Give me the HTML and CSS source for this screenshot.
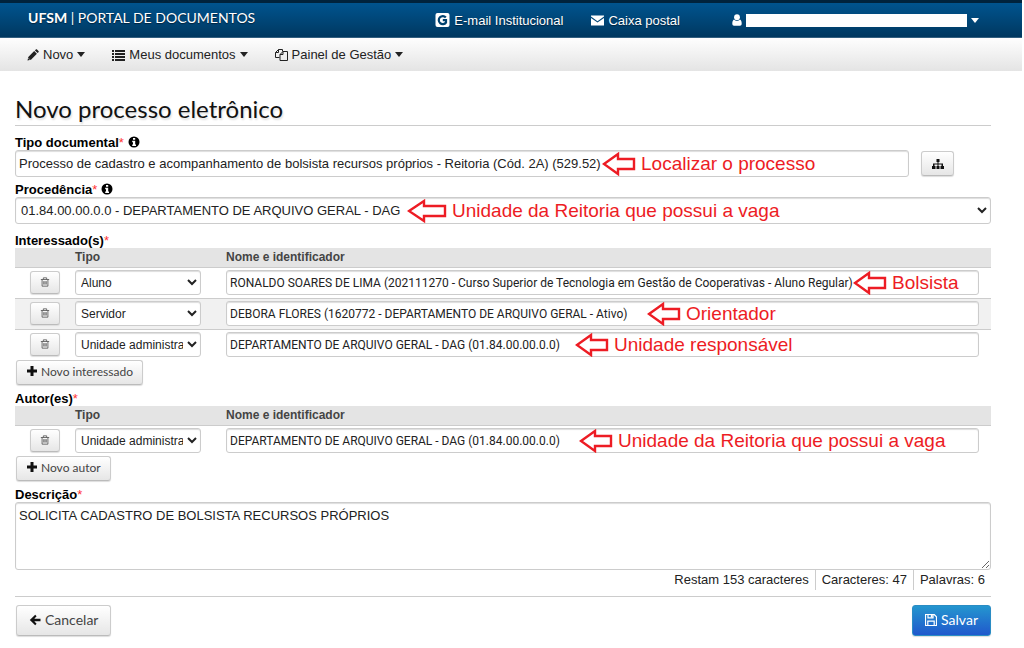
FILE: index.html
```
<!DOCTYPE html>
<html lang="pt-BR">
<head>
  <meta charset="UTF-8">
  <title>UFSM | Portal de Documentos</title>
  <link rel="stylesheet" href="styles.css">
</head>
<body>
  <!-- shared icons -->
  <svg class="sprite" aria-hidden="true">
    <symbol id="trash" viewBox="0 0 12 12"><path d="M1 3h10M4 3V1h4v2M2.500 3v8h7V3M4.500 5v4M6 5v4M7.500 5v4" fill="none" stroke="currentColor"/></symbol>
    <symbol id="plus" viewBox="0 0 12 12"><path d="M4.500 1h3v3.500H11v3H7.500V11h-3V7.500H1v-3h3.500z"/></symbol>
    <symbol id="info" viewBox="0 0 12 12"><circle cx="6" cy="6" r="5.500"/><path d="M5 2h2.200v1.800H5zM4.200 4.800h3v3.700H8V10H4.200V8.500H5V6.200h-.8z" fill="#fff"/></symbol>
    <symbol id="arrow" viewBox="0 0 34 24"><path d="M2 12 16 2v5h16v10H16v5z" fill="#fff" stroke="#ed1c24" stroke-width="2.400"/></symbol>
    <symbol id="arrow-long" viewBox="0 0 40 24"><path d="M2 12 17 2v5h21v10H17v5z" fill="#fff" stroke="#ed1c24" stroke-width="2.400"/></symbol>
  </svg>

  <header class="topbar">
    <a class="brand" href="#"><b>UFSM</b> | PORTAL DE DOCUMENTOS</a>
    <nav class="toplinks">
      <a class="mail" href="#">
        <svg class="icon-g" viewBox="0 0 14 14"><rect width="14" height="14" rx="2" fill="#fff"/><path d="M10.300 4.500A4 4 0 1 0 10.500 9.500V7.200H7.300" fill="none" stroke="#00426f" stroke-width="2.200"/></svg>
        E-mail Institucional
      </a>
      <a class="inbox" href="#">
        <svg class="icon-list" viewBox="0 0 13 12"><path d="M0 1.500h13v1L6.500 7.200 0 2.500zM0 4l6.500 4.600L13 4v7.500H0z"/></svg>
        Caixa postal
      </a>
      <button class="user" type="button" aria-label="Usuário">
        <svg class="icon-user" viewBox="0 0 10 12"><circle cx="5" cy="3.200" r="2.900"/><path d="M2 5.500C.6 6.200.3 8 .3 9.800.3 11 1 11.700 2 11.700h6c1 0 1.700-.7 1.700-1.900 0-1.800-.3-3.600-1.700-4.300-1.500 1.800-4.500 1.800-6 0z"/></svg>
        <span class="user-name"></span>
        <span class="caret"></span>
      </button>
    </nav>
  </header>

  <nav class="menu">
    <a href="#">
      <svg class="icon" viewBox="0 0 12 12"><path d="M.5 11.500 1.300 8 7.200 2.100 9.900 4.800 4 10.700zM7.900 1.400l.9-.9c.4-.4.8-.4 1.200 0l1.500 1.500c.4.400.4.800 0 1.200l-.9.900z"/><path d="M1.500 9.300l1.200 1.200" stroke="#fff" stroke-width=".7"/></svg>
      Novo <span class="caret"></span>
    </a>
    <a href="#">
      <svg class="icon-list" viewBox="0 0 13 12"><path d="M0 1h2v2H0zM3 1h10v2H3zM0 4h2v2H0zM3 4h10v2H3zM0 7h2v2H0zM3 7h10v2H3zM0 10h2v2H0zM3 10h10v2H3z"/></svg>
      Meus documentos <span class="caret"></span>
    </a>
    <a href="#">
      <svg class="icon-list" viewBox="0 0 13 12"><path d="M4.500 8.500h-4v-5l3-3h4v2M3.500.5v3h-3M5 11.500v-6l3-3h4.500v9zM8 2.500v3H5" fill="none" stroke="currentColor"/></svg>
      Painel de Gestão <span class="caret"></span>
    </a>
  </nav>

  <main>
    <h1>Novo processo eletrônico</h1>
    <form>
      <label class="title" for="tipo">Tipo documental<i>*</i> <svg class="icon"><use href="#info"/></svg></label>
      <div class="search">
        <div class="field">
          <input class="control" id="tipo" type="text" value="Processo de cadastro e acompanhamento de bolsista recursos próprios - Reitoria (Cód. 2A) (529.52)">
          <span class="note note-tipo"><svg><use href="#arrow"/></svg>Localizar o processo</span>
        </div>
        <button class="btn btn-tree" type="button" aria-label="Localizar">
          <svg class="icon" viewBox="0 0 12 12"><path d="M4.500 1h3v3h-1v1.500H11V8h1v3H8.500V8h1V6.500h-3V8h1v3h-3V8h1V6.500h-3V8h1v3H0V8h1V5.500h4.500V4h-1z"/></svg>
        </button>
      </div>

      <label class="title" for="procedencia">Procedência<i>*</i> <svg class="icon"><use href="#info"/></svg></label>
      <div class="field">
        <select class="control" id="procedencia"><option>01.84.00.00.0.0 - DEPARTAMENTO DE ARQUIVO GERAL - DAG</option></select>
        <span class="note note-procedencia"><svg class="long"><use href="#arrow-long"/></svg>Unidade da Reitoria que possui a vaga</span>
      </div>

      <h2 class="title people">Interessado(s)<i>*</i></h2>
      <table>
        <thead>
          <tr><th class="col-del"></th><th class="col-tipo">Tipo</th><th>Nome e identificador</th></tr>
        </thead>
        <tbody>
          <tr>
            <td><button class="btn btn-del" type="button" aria-label="Excluir"><svg><use href="#trash"/></svg></button></td>
            <td><select aria-label="Tipo"><option>Aluno</option></select></td>
            <td>
              <div class="field">
                <input type="text" aria-label="Nome e identificador" value="RONALDO SOARES DE LIMA (202111270 - Curso Superior de Tecnologia em Gestão de Cooperativas - Aluno Regular)">
                <span class="note note-aluno"><svg><use href="#arrow"/></svg>Bolsista</span>
              </div>
            </td>
          </tr>
          <tr>
            <td><button class="btn btn-del" type="button" aria-label="Excluir"><svg><use href="#trash"/></svg></button></td>
            <td><select aria-label="Tipo"><option>Servidor</option></select></td>
            <td>
              <div class="field">
                <input type="text" aria-label="Nome e identificador" value="DEBORA FLORES (1620772 - DEPARTAMENTO DE ARQUIVO GERAL - Ativo)">
                <span class="note note-servidor"><svg><use href="#arrow"/></svg>Orientador</span>
              </div>
            </td>
          </tr>
          <tr>
            <td><button class="btn btn-del" type="button" aria-label="Excluir"><svg><use href="#trash"/></svg></button></td>
            <td><select aria-label="Tipo"><option>Unidade administrativa</option></select></td>
            <td>
              <div class="field">
                <input type="text" aria-label="Nome e identificador" value="DEPARTAMENTO DE ARQUIVO GERAL - DAG (01.84.00.00.0.0)">
                <span class="note note-unidade"><svg><use href="#arrow"/></svg>Unidade responsável</span>
              </div>
            </td>
          </tr>
        </tbody>
      </table>
      <button class="btn btn-add" type="button"><svg class="icon"><use href="#plus"/></svg>Novo interessado</button>

      <h2 class="title">Autor(es)<i>*</i></h2>
      <table>
        <thead>
          <tr><th class="col-del"></th><th class="col-tipo">Tipo</th><th>Nome e identificador</th></tr>
        </thead>
        <tbody>
          <tr>
            <td><button class="btn btn-del" type="button" aria-label="Excluir"><svg><use href="#trash"/></svg></button></td>
            <td><select aria-label="Tipo"><option>Unidade administrativa</option></select></td>
            <td>
              <div class="field">
                <input type="text" aria-label="Nome e identificador" value="DEPARTAMENTO DE ARQUIVO GERAL - DAG (01.84.00.00.0.0)">
                <span class="note note-autor"><svg><use href="#arrow"/></svg>Unidade da Reitoria que possui a vaga</span>
              </div>
            </td>
          </tr>
        </tbody>
      </table>
      <button class="btn btn-add" type="button"><svg class="icon"><use href="#plus"/></svg>Novo autor</button>

      <label class="title" for="descricao">Descrição<i>*</i></label>
      <textarea id="descricao">SOLICITA CADASTRO DE BOLSISTA RECURSOS PRÓPRIOS</textarea>
      <div class="counters">
        <span>Restam 153 caracteres</span>
        <span>Caracteres: 47</span>
        <span>Palavras: 6</span>
      </div>

      <div class="actions">
        <button class="btn btn-big" type="button">
          <svg class="icon" viewBox="0 0 12 12"><path d="M6.200.8 7.600 2.200 5.300 4.700H11.500v2.600H5.300l2.300 2.500-1.400 1.400L.8 6z"/></svg>Cancelar
        </button>
        <button class="btn btn-big btn-save" type="submit">
          <svg class="icon" viewBox="0 0 12 12"><path d="M.5.5h8.700l2.300 2.300v8.700H.5zM3 .5v3.300h5V.5M2.800 11.500V7.200h6.400v4.300" fill="none" stroke="currentColor" stroke-width="1.200"/><path d="M5.800 1h1.700v2.400H5.800z"/></svg>Salvar
        </button>
      </div>
    </form>
  </main>
</body>
</html>
```
FILE: styles.css
```
* {
  box-sizing: border-box;
}

body {
  margin: 0;
  background: #fff;
  color: #222;
  font-family: "Liberation Sans", Arial, sans-serif;
  font-size: 13px;
}

a {
  color: inherit;
  text-decoration: none;
}

svg {
  fill: currentColor;
  flex: none;
}

.sprite {
  display: none;
}

.icon {
  width: 12px;
  height: 12px;
}

.caret {
  border: 4px solid transparent;
  border-top: 5px solid currentColor;
  border-bottom: 0;
}

/* top bar */
.topbar {
  display: flex;
  justify-content: space-between;
  height: 38px;
  margin-right: 2px;
  padding: 0 43px 0 28px;
  border-top: 3px solid #00233d;
  border-bottom: 1px solid #335f80;
  background: linear-gradient(#00548f, #003860);
  color: #fff;
  text-shadow: 0 1px 1px #00233d;
}

.brand {
  font-family: Lato, sans-serif;
  font-size: 14px;
  line-height: 30px;
}

.toplinks {
  display: flex;
  align-items: center;
}

.toplinks a,
.user {
  display: flex;
  align-items: center;
  gap: 4px;
}

.mail {
  margin-right: 28px;
}

.inbox {
  margin-right: 52px;
}

.icon-g {
  width: 15px;
  height: 14px;
}

.user {
  padding: 0;
  border: 0;
  background: none;
  color: #fff;
}

.icon-user {
  width: 10px;
  height: 12px;
}

.user-name {
  width: 221px;
  height: 13px;
  background: #fff;
}

/* menu */
.menu {
  display: flex;
  gap: 27px;
  height: 33px;
  margin-right: 2px;
  padding: 0 27px;
  background: linear-gradient(#fefefe, #e4e4e4);
}

.menu a {
  display: flex;
  align-items: center;
  gap: 4px;
}

.icon-list {
  width: 13px;
  height: 12px;
}

main {
  padding: 22px 33px 12px 15px;
}

h1 {
  margin: 0 0 8px;
  border-bottom: 1px solid #ccc;
  color: #111;
  font-family: Lato, sans-serif;
  font-size: 24px;
  font-weight: 400;
  line-height: 32px;
  text-shadow: 1px 2px 2px #ddd;
}

.title {
  display: flex;
  align-items: center;
  margin: 0;
  height: 16px;
  color: #000;
  font-size: 13px;
  font-weight: bold;
}

.title i {
  color: #f33;
  font-style: normal;
  font-weight: normal;
}

.title .icon {
  margin-left: 4px;
}

.people {
  margin-top: 8px;
}

/* controls */
.field {
  position: relative;
}

input,
select,
textarea {
  display: block;
  width: 100%;
  height: 25px;
  padding: 0 3px;
  border: 1px solid #ccc;
  border-radius: 3px;
  background: #fff;
  box-shadow: inset 0 1px 1px #ddd;
  color: #222;
  font-family: inherit;
  font-size: 12px;
}

td input {
  font-family: Roboto, Arial, sans-serif;
}

.control {
  height: 27px;
  font-size: 13px;
}

select {
  padding: 0 1px;
}

.search {
  display: flex;
  align-items: center;
  gap: 12px;
  margin-bottom: 4px;
  padding-right: 37px;
}

.search .field {
  flex: 1;
}

.btn {
  display: flex;
  align-items: center;
  justify-content: center;
  border: 1px solid #ccc;
  border-bottom-color: #bbb;
  border-radius: 3px;
  background: linear-gradient(#fff, #e6e6e6);
  box-shadow: 0 1px 1px #ddd;
  color: #111;
  font-family: Lato, sans-serif;
}

.btn-tree {
  width: 33px;
  height: 25px;
  padding: 0;
}

.btn-del {
  width: 30px;
  height: 23px;
  margin-left: 15px;
  padding: 0 0 2px;
  color: #555;
}

.btn-del svg {
  width: 10px;
  height: 10px;
}

.btn-add {
  gap: 3px;
  height: 25px;
  margin: 0 0 5px 1px;
  padding: 0 9px 3px;
  color: #444;
  font-size: 12px;
}

.btn-big {
  gap: 4px;
  height: 31px;
  padding: 0 12px 2px;
  color: #444;
  font-size: 14px;
}

.btn-add .icon,
.btn-big .icon {
  color: #111;
}

.btn-save,
.btn-save .icon {
  color: #fff;
}

.btn-save {
  border-color: #2a8cc4;
  background: linear-gradient(#2496cf, #2058cc);
}

/* tables */
table {
  width: 100%;
  border-collapse: separate;
  border-spacing: 0;
  table-layout: fixed;
}

.col-del {
  width: 60px;
}

.col-tipo {
  width: 151px;
}

th {
  height: 19px;
  padding: 0 0 2px;
  background: #e4e4e4;
  color: #444;
  font-size: 12px;
  text-align: left;
}

td {
  padding: 2px 0 3px;
  border-top: 1px solid #ccc;
}

td:last-child {
  padding-right: 12px;
}

td select {
  width: 126px;
}

tbody tr:nth-child(even) {
  background: #f1f1f1;
}

/* red notes laid over the fields */
.note {
  position: absolute;
  top: 0;
  display: flex;
  align-items: center;
  gap: 5px;
  height: 100%;
  color: #ed1c24;
  font-size: 19px;
  white-space: nowrap;
}

.note svg {
  width: 34px;
  height: 24px;
}

.note .long {
  width: 40px;
}

.note-tipo {
  left: 587px;
}

.note-procedencia {
  left: 392px;
}

.note-aluno {
  left: 627px;
}

.note-servidor {
  left: 421px;
}

.note-unidade {
  left: 349px;
}

.note-autor {
  left: 353px;
}

textarea {
  height: 68px;
  padding: 5px 3px;
  font-size: 13px;
  resize: vertical;
}

.counters {
  display: flex;
  justify-content: flex-end;
  height: 27px;
  border-bottom: 1px solid #ccc;
}

.counters span {
  height: 20px;
  padding: 0 6px;
  line-height: 20px;
}

.counters span + span {
  border-left: 1px solid #ccc;
}

.actions {
  display: flex;
  justify-content: space-between;
  padding: 8px 0 0 1px;
}
```
